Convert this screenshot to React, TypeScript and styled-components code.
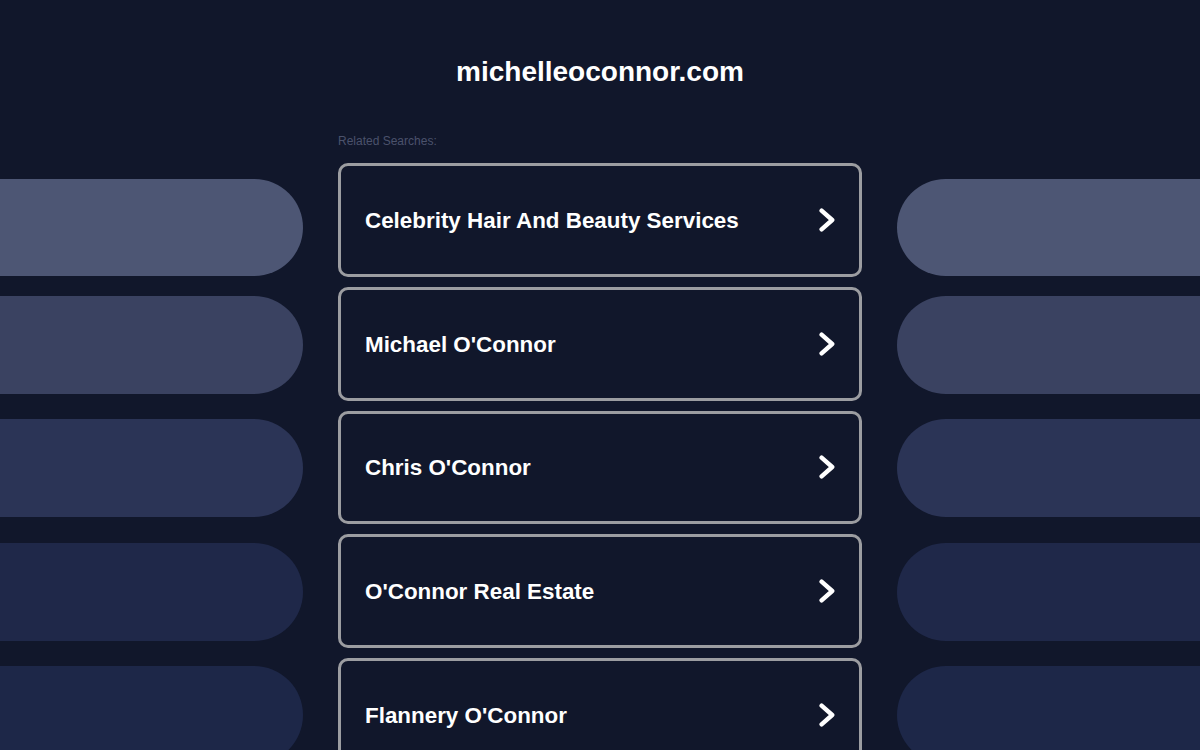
import React from "react";
import styled, { createGlobalStyle } from "styled-components";

const GlobalStyle = createGlobalStyle`
  html, body {
    margin: 0;
    padding: 0;
    background: #11172b;
    overflow: hidden;
  }
  body {
    font-family: "Liberation Sans", Arial, sans-serif;
    color: #ffffff;
  }
`;

const Page = styled.div`
  width: 1200px;
  height: 750px;
  overflow: hidden;
  background: #11172b;
`;

const Title = styled.h1`
  margin: 0;
  padding-top: 56px;
  font-size: 28px;
  line-height: 32px;
  font-weight: 700;
  text-align: center;
  color: #ffffff;
`;

const Layout = styled.div`
  display: grid;
  grid-template-columns: 303px 524px 303px;
  column-gap: 35px;
`;

const SideColumn = styled.div`
  display: flex;
  flex-direction: column;
  padding-top: 90.5px;
`;

const Pill = styled.div<{ $color: string; $side: "left" | "right"; $gap: number }>`
  height: 97.5px;
  margin-top: ${(p) => p.$gap}px;
  background-color: ${(p) => p.$color};
  border-radius: ${(p) => (p.$side === "left" ? "0 49px 49px 0" : "49px 0 0 49px")};
  flex-shrink: 0;
`;

const Center = styled.div`
  display: flex;
  flex-direction: column;
`;

const Label = styled.div`
  margin-top: 46px;
  font-size: 12px;
  line-height: 14px;
  color: #4b526c;
`;

const CardList = styled.div`
  display: flex;
  flex-direction: column;
  gap: 10px;
  margin-top: 15px;
`;

const Card = styled.a`
  box-sizing: border-box;
  height: 113.75px;
  display: flex;
  align-items: center;
  justify-content: space-between;
  padding: 2px 24px 0;
  border: 3px solid #9c9da1;
  border-radius: 10px;
  background: #11172b;
  color: #ffffff;
  text-decoration: none;
  flex-shrink: 0;
`;

const CardText = styled.span`
  font-size: 22.4px;
  font-weight: 700;
  line-height: 26px;
`;

const Chevron = () => (
  <svg width="16" height="24" viewBox="0 0 16 24" fill="none" style={{ marginTop: -2 }}>
    <polyline
      points="2.6,2.6 13.2,12 2.6,21.4"
      stroke="#ffffff"
      strokeWidth="4.4"
      strokeLinecap="round"
      strokeLinejoin="round"
    />
  </svg>
);

const pills = [
  { color: "#4d5674", gap: 0 },
  { color: "#3a4261", gap: 20 },
  { color: "#2b3456", gap: 25.5 },
  { color: "#1f2849", gap: 26.5 },
  { color: "#1d2748", gap: 25.5 },
];

const searches = [
  "Celebrity Hair And Beauty Services",
  "Michael O'Connor",
  "Chris O'Connor",
  "O'Connor Real Estate",
  "Flannery O'Connor",
];

export default function App() {
  return (
    <Page>
      <GlobalStyle />
      <Title>michelleoconnor.com</Title>
      <Layout>
        <SideColumn>
          {pills.map((p, i) => (
            <Pill key={i} $color={p.color} $side="left" $gap={p.gap} />
          ))}
        </SideColumn>
        <Center>
          <Label>Related Searches:</Label>
          <CardList>
            {searches.map((s) => (
              <Card key={s} href="#">
                <CardText>{s}</CardText>
                <Chevron />
              </Card>
            ))}
          </CardList>
        </Center>
        <SideColumn>
          {pills.map((p, i) => (
            <Pill key={i} $color={p.color} $side="right" $gap={p.gap} />
          ))}
        </SideColumn>
      </Layout>
    </Page>
  );
}
